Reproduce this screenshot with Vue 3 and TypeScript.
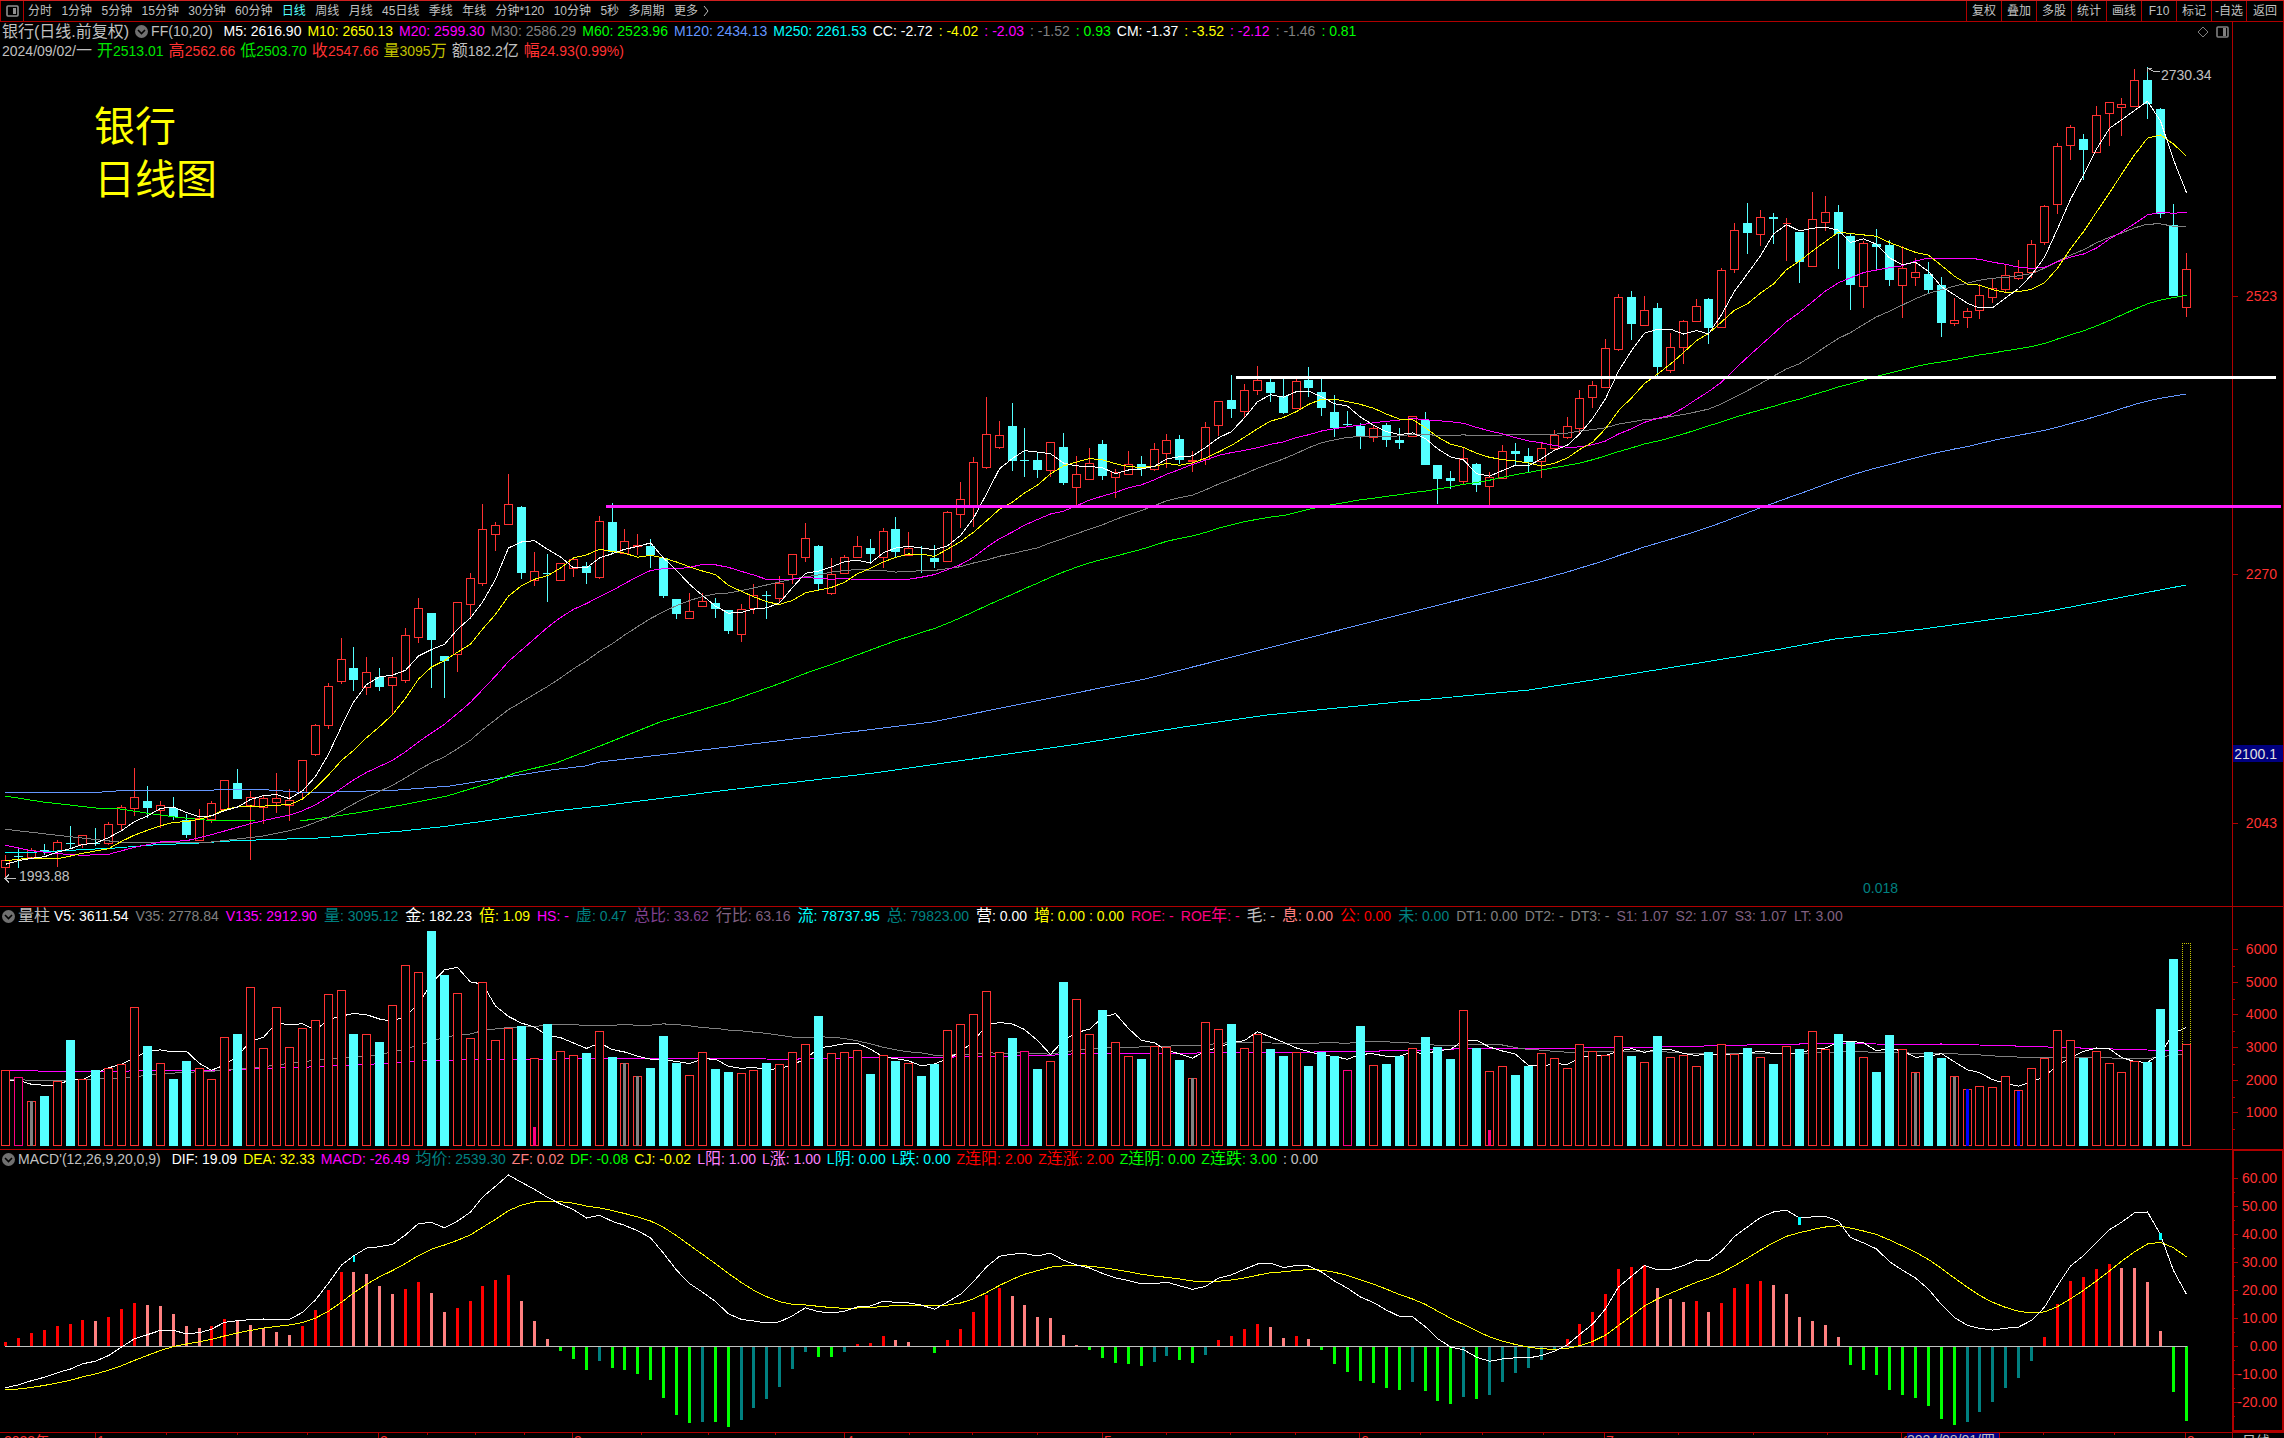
<script setup lang="ts">
type Point = [number, number]
interface Entry { text: string; color: string }
interface Run { text: string; han: boolean }
interface Candle { up: boolean; high: number; top: number; bottom: number; low: number; close: number }

const periods = ['分时', '1分钟', '5分钟', '15分钟', '30分钟', '60分钟', '日线', '周线', '月线', '45日线', '季线', '年线', '分钟*120', '10分钟', '5秒', '多周期', '更多']
const tools = ['复权', '叠加', '多股', '统计', '画线', 'F10', '标记', '-自选', '返回']

const RED = '#ff3232'
const AQUA = '#54ffff'
const SILVER = '#c0c0c0'
const GRAY = '#808080'
const TEAL = '#008080'
const MAGENTA = '#ff00ff'
const YELLOW = '#ffff00'
const LIME = '#00ff00'
const CYAN = '#00ffff'
const WHITE = '#ffffff'
const PINK = '#ff0080'
const SALMON = '#ff8080'
const PLUM = '#806080'
const BLUE = '#6496ff'

const e = (text: string, color: string): Entry => ({ text, color })

const averages: Entry[] = [
  e('M5: 2616.90', WHITE), e('M10: 2650.13', YELLOW), e('M20: 2599.30', MAGENTA), e('M30: 2586.29', GRAY),
  e('M60: 2523.96', LIME), e('M120: 2434.13', BLUE), e('M250: 2261.53', CYAN), e('CC: -2.72', WHITE),
  e(': -4.02', YELLOW), e(': -2.03', MAGENTA), e(': -1.52', GRAY), e(': 0.93', LIME), e('CM: -1.37', WHITE),
  e(': -3.52', YELLOW), e(': -2.12', MAGENTA), e(': -1.46', GRAY), e(': 0.81', LIME),
]
const quote: Entry[] = [
  e('2024/09/02/一', SILVER), e('开2513.01', '#00e600'), e('高2562.66', RED), e('低2503.70', '#00e600'),
  e('收2547.66', RED), e('量3095万', '#c0c000'), e('额182.2亿', SILVER), e('幅24.93(0.99%)', RED),
]
const volumeStats: Entry[] = [
  e('V5: 3611.54', WHITE), e('V35: 2778.84', GRAY), e('V135: 2912.90', MAGENTA), e('量: 3095.12', TEAL),
  e('金: 182.23', WHITE), e('倍: 1.09', YELLOW), e('HS: -', MAGENTA), e('虚: 0.47', TEAL), e('总比: 33.62', '#804090'),
  e('行比: 63.16', PLUM), e('流: 78737.95', CYAN), e('总: 79823.00', TEAL), e('营: 0.00', WHITE), e('增: 0.00 : 0.00', YELLOW),
  e('ROE: -', PINK), e('ROE年: -', PINK), e('毛: -', SILVER), e('息: 0.00', SALMON), e('公: 0.00', '#ff0000'),
  e('未: 0.00', TEAL), e('DT1: 0.00', GRAY), e('DT2: -', GRAY), e('DT3: -', GRAY), e('S1: 1.07', PLUM),
  e('S2: 1.07', PLUM), e('S3: 1.07', PLUM), e('LT: 3.00', PLUM),
]
const macdStats: Entry[] = [
  e('DIF: 19.09', WHITE), e('DEA: 32.33', YELLOW), e('MACD: -26.49', MAGENTA), e('均价: 2539.30', TEAL),
  e('ZF: 0.02', SALMON), e('DF: -0.08', LIME), e('CJ: -0.02', YELLOW), e('L阳: 1.00', '#ff80ff'), e('L涨: 1.00', '#ff80ff'),
  e('L阴: 0.00', CYAN), e('L跌: 0.00', CYAN), e('Z连阳: 2.00', '#ff0000'), e('Z连涨: 2.00', '#ff0000'),
  e('Z连阴: 0.00', LIME), e('Z连跌: 3.00', LIME), e(': 0.00', SILVER),
]

/* Chinese runs are set larger than the digits beside them. */
function runs(text: string): Run[] {
  return text.split(/([\u4e00-\u9fff]+)/).filter(Boolean).map(t => ({ text: t, han: /[\u4e00-\u9fff]/.test(t) }))
}

/* Horizontal pixel of bar i. */
const X = (i: number) => Math.round(5 + i * 12.905)

/* Candles: direction, high, body top, body bottom, low, in thirds of a unit below `base`. */
function candles(base: number, rows: string): Candle[] {
  return rows.trim().split(/\s+/).map(row => {
    const up = row[0] === 'r'
    const [high, top, bottom, low] = row.slice(1).split(',').map(v => base + Number(v) / 3)
    return { up, high, top, bottom, low, close: up ? top : bottom }
  })
}

const bars: Candle[] = [
  ...candles(440, `
    r1246,1261,1282,1315 c1226,1249,1249,1283 r1224,1231,1252,1252 c1212,1231,1234,1245 r1200,1207,1234,1280
    c1158,1210,1210,1224 r1186,1186,1213,1224 c1164,1208,1210,1217 r1146,1153,1210,1214 r1095,1102,1153,1170
    r984,1072,1105,1128 c1038,1084,1103,1133 r1083,1096,1111,1163 c1071,1105,1132,1140 c1121,1140,1185,1194
    r1107,1134,1201,1201 r1083,1090,1138,1148 r1021,1021,1107,1110 c987,1030,1076,1076 r1053,1072,1096,1260
    r1066,1075,1102,1151 r999,1075,1087,1119 r1047,1081,1096,1144 r961,961,1057,1075 r852,856,943,948
    r730,739,856,866 r594,658,724,732 c621,685,719,753 r651,697,742,765 c684,711,740,753
    r651,712,736,823 r564,586,721,728 r474,505,592,609 c519,519,599,744 c648,648,663,774
    r487,487,643,696 r400,415,493,535 r192,268,430,437 r246,256,283,333 r102,193,253,253
    c198,202,398,417 r336,394,421,437 c342,398,398,486 r370,370,421,421 r350,358,385,411 c366,378,398,432`),
  ...candles(380, `
    r408,424,592,597 c369,427,515,519 r447,484,520,520 r462,496,499,525 c477,498,525,564
    c534,534,648,654 c657,657,701,717 r639,694,715,715 r639,664,679,679 c654,669,686,714
    c690,690,753,762 r672,688,763,786 r612,646,685,702 c633,646,646,717 r588,610,655,670
    r523,523,583,612 r429,475,532,546 c495,498,612,631 r534,583,640,645 r525,532,580,580
    r468,499,532,532 c477,504,521,549 r444,454,532,564 c411,447,515,531 r456,505,525,525
    c498,523,526,579 c495,534,545,564 r393,397,544,544 r306,358,403,444 r231,247,379,441
    r51,163,262,267 r123,166,202,207 c69,138,242,273 c144,241,241,291 c219,241,269,294
    r187,187,271,290 c159,202,308,315 r228,283,322,376 r204,250,298,298 c180,192,287,300
    r267,277,292,354 r213,253,283,283 c228,252,268,288 r189,208,268,273`),
  ...candles(340, `
    r282,301,341,384 c285,297,360,372 r333,361,365,396 r246,262,358,375 r184,184,257,288
    c105,180,207,234 r132,151,215,230 r78,121,152,165 c115,126,159,186 c115,169,219,222
    r115,124,206,206 c81,120,144,171 c115,156,204,228 c165,216,264,291 c213,252,255,261
    c249,257,290,327 r258,265,293,306 c249,255,300,321 c264,300,309,327 r229,229,290,290
    c216,240,375,375 c375,375,417,492 c393,414,423,447 r321,355,425,431 c369,372,435,456
    r396,412,440,495 r315,334,414,417 c309,333,342,375 c324,348,366,397 r306,325,364,414
    r270,286,325,330 r231,259,293,297 r150,175,266,283 r123,136,173,204`),
  ...candles(180, `
    r477,505,623,623 r342,352,509,513 c333,351,432,480 r348,391,437,437 c369,384,561,588
    r459,502,572,579 r420,424,503,552 r357,379,425,425 c354,357,444,492 r264,271,443,443
    r129,151,269,279 c69,129,159,222 r90,112,164,198 c99,111,117,192 r114,130,130,243
    c156,156,246,309 r36,118,260,260 r48,97,128,153 c75,96,162,267 c159,168,315,390
    r183,190,320,384 c147,192,201,267 c180,195,300,318 r198,265,317,414 r234,277,293,318
    c246,282,330,340 c291,315,429,471 r354,421,429,438 r384,394,413,444 r312,346,392,417
    r294,325,353,369 r252,286,329,340 r240,277,296,300 r180,193,278,293`),
  ...candles(0, `
    r615,619,728,735 r429,439,614,642 r375,382,437,480 c402,417,450,540 r318,346,458,458
    r307,307,341,438 r294,313,323,408 r207,241,320,320 c201,240,312,357 c324,327,642,654
    c612,675,888,888 r759,808,922,951`),
]

function hollow(i: number, top: number, bottom: number): string {
  const y = Math.floor(top)
  return `M${X(i) - 3.5} ${y + 0.5}h8v${Math.floor(bottom) - y}h-8z`
}

/* Linear interpolation between [index, value] anchors. */
function between(anchors: Point[]): number[] {
  const out: number[] = []
  for (let k = 1; k < anchors.length; k++) {
    const [i0, v0] = anchors[k - 1]
    const [i1, v1] = anchors[k]
    for (let i = i0; i < i1; i++) out.push(v0 + ((v1 - v0) * (i - i0)) / (i1 - i0))
  }
  out.push(anchors[anchors.length - 1][1])
  return out
}

/* Moving average over n values, led by the values known from earlier history. */
function average(values: number[], n: number, lead: number[]): number[] {
  return values.map((_, i) => i < n - 1 ? lead[i] : values.slice(i - n + 1, i + 1).reduce((a, b) => a + b, 0) / n)
}

const polyline = (values: number[]) => values.map((v, i) => `${X(i) + 0.5},${v.toFixed(1)}`).join(' ')
const joined = (points: Point[]) => points.map(p => p.join(',')).join(' ')

const closes = bars.map(b => b.close)
const fromPrice = (anchors: Point[]) => between(anchors).map(v => 440 + v / 3)
const ma5 = average(closes, 5, fromPrice([[0, 1273], [1, 1262], [2, 1255], [3, 1250]]))
const ma10 = average(closes, 10, fromPrice([[0, 1262], [2, 1254], [4, 1256], [6, 1240], [8, 1226]]))
const ma20 = average(closes, 20, fromPrice([[0, 1216], [2, 1232], [4, 1241], [6, 1246], [8, 1243], [10, 1222], [12, 1206], [14, 1202], [16, 1184], [18, 1162]]))
const ma30 = average(closes, 30, fromPrice([[0, 1168], [4, 1186], [9, 1207], [16, 1206], [20, 1188], [22, 1172], [23, 1162], [25, 1132], [28, 1072]]))
const tail = (n: number): Point[] => average(closes, n, []).map((v, i): Point => [X(i) + 0.5, v]).slice(n - 1)
const ma60: Point[] = [[5, 796], [43, 802], [96, 808], [120, 809], [146, 813], [175, 817], [205, 820], [255, 821], [300, 821], [330, 817], [362, 812], [402, 805], [447, 796], [490, 783], [515, 773], [556, 763], [600, 746], [660, 722], [728, 702], ...tail(60)]
const ma120: Point[] = [[5, 792], [102, 792], [130, 790], [214, 790], [230, 789], [256, 789], [296, 792], [335, 792], [398, 790], [450, 786], [513, 776], [551, 770], [585, 766], [600, 762], [728, 747], [932, 722], [1145, 679], ...tail(120)]
const ma250: Point[] = [[5, 853], [38, 852], [76, 850], [115, 848], [153, 845], [199, 843], [230, 841], [256, 840], [318, 838], [356, 835], [402, 831], [440, 827], [478, 822], [513, 817], [555, 811], [600, 806], [728, 790], [874, 773], [1078, 744], [1183, 727], [1267, 715], [1398, 702], [1529, 690], [1631, 674], [1748, 655], [1835, 639], [1923, 629], [2039, 613], [2097, 602], [2186, 585]]

const volumes = `
  511 532 604 588 544 420 538 510 505 493 322 438 490 537 483 505 538 412 402 262 445 322 442 385 361 283 271 402 403 426
  316 196 217 93 225 280 415 247 421 385 378 475 372 454 466 459 394 471 490 529 504 408 489 526 457 507 516 520 511 489
  493 457 433 348 460 457 451 522 466 483 490 528 492 391 373 343 274 457 414 454 507 484 246 298 403 330 427 469 477 439
  442 480 535 367 388 372 445 403 447 468 457 498 456 468 511 378 496 492 468 445 411 441 477 331 444 514 499 525 498 460
  475 505 433 454 466 409 468 487 408 472 466 499 456 433 463 444 472 492 439 447 394 448 402 426 472 516 405 449 518 457
  475 530 567 560 563 530 572 506 476 392 422 475 455 491 518 485 487 328 178 434`.trim().split(/\s+/).map(v => 900 + Number(v) / 3)
const outlined = [1, 79, 104]
const striped = [2, 48, 49, 92, 148, 151]
const marked = [152, 156]
const small: Point[] = [[41, 1127], [115, 1130]]
const fromVolume = (anchors: Point[]) => between(anchors).map(v => 900 + v / 3)
const v5 = average(volumes, 5, fromVolume([[0, 540], [1, 541], [2, 553], [3, 556]]))
const v35 = average(volumes, 35, fromVolume([[0, 537], [2, 541], [5, 540], [10, 532], [11, 524], [14, 517], [16, 514], [18, 508], [20, 500], [22, 490], [25, 476], [29, 464], [31, 447], [33, 424]]))
const v135 = fromVolume([[0, 511], [2, 512], [3, 514], [9, 514], [11, 511], [17, 511], [20, 505], [23, 502], [26, 496], [30, 490], [33, 481], [37, 479], [43, 478], [44, 475], [57, 475], [60, 478], [63, 476], [66, 473], [72, 472], [81, 466], [83, 461], [91, 460], [95, 457], [100, 457], [108, 452], [113, 446], [120, 445], [127, 442], [133, 437], [137, 433], [143, 430], [147, 434], [150, 432], [155, 437], [160, 443], [165, 449], [169, 453]])

const oscillator = `
  606 594 579 570 558 552 540 543 531 507 489 495 498 522 558 564 558 537 545 555 564 576 585 558 510 450 396 396 402 438
  462 447 426 459 516 504 483 438 420 405 483 543 597 633 657 690 663 684 690 702 720 774 825 849 846 846 861 840 804 777
  741 687 636 651 651 636 612 609 588 600 606 619 639 600 567 516 465 444 468 495 531 534 585 615 630 654 669 672 678 666
  648 660 669 645 600 588 567 552 561 594 588 597 630 672 696 723 729 744 750 726 753 783 792 771 777 765 726 699 684 660
  631 597 552 516 462 387 381 375 444 477 486 485 516 489 444 432 423 435 462 531 543 555 591 675 690 705 750 765 774 798
  837 856 847 816 786 744 714 663 591 492 423 411 388 372 385 385 427 574 756 843`.trim().split(/\s+/).map(v => (619 - Number(v)) / 3)
const ZERO = 1346
const columns = oscillator.map((h, i) => {
  const rising = h > (i ? oscillator[i - 1] : 0)
  const size = Math.round(Math.abs(h))
  return { h, size, y: h > 0 ? ZERO - size : ZERO, color: h > 0 ? (rising ? '#ff0000' : SALMON) : (rising && i !== 63 ? TEAL : LIME) }
})
/* The signal line moves by a fixed share of each column. */
const dea: number[] = []
oscillator.forEach((h, i) => dea.push(i ? dea[i - 1] - h * (h > 0 ? 0.122 : 0.1225) : 1390))
const dif = dea.map((v, i) => v - oscillator[i] / 2)

const priceTicks: [string, number][] = [['2523', 296], ['2270', 574], ['2043', 823]]
const volumeTicks: [string, number][] = [['6000', 949], ['5000', 982], ['4000', 1014], ['3000', 1047], ['2000', 1080], ['1000', 1112]]
const macdTicks: [string, number][] = [60, 50, 40, 30, 20, 10, 0, -10, -20].map((v): [string, number] => [v.toFixed(2), Math.round(ZERO - v * 2.8)])

const months: [string, number][] = [['2023年', 2], ['1', 95], ['2', 378], ['3', 572], ['4', 844], ['5', 1102], ['6', 1359], ['7', 1604], ['8', 1901], ['9', 2185]]
const weeks = [166, 237, 307, 427, 475, 524, 641, 708, 775, 909, 972, 1037, 1166, 1230, 1295, 1420, 1482, 1543, 1678, 1753, 1827, 2043, 2114]
</script>

<template>
  <div class="terminal">
    <nav class="menu">
      <button class="panel-toggle" aria-label="侧栏">
        <svg width="13" height="12" viewBox="0 0 13 12"><rect x="1" y="1" width="11" height="10" rx="1" fill="none" stroke="#909090" stroke-width="1.6" /><rect x="7" y="3" width="3" height="6" fill="#909090" /></svg>
      </button>
      <div class="periods">
        <button v-for="p in periods" :key="p" :class="{ active: p === '日线' }">{{ p }}<svg v-if="p === '更多'" class="more" width="7" height="12" viewBox="0 0 7 12"><path d="M1 1l4 5l-4 5" fill="none" stroke="#c0c0c0" /></svg></button>
      </div>
      <div class="tools">
        <button v-for="t in tools" :key="t">{{ t }}</button>
      </div>
    </nav>

    <section class="pane">
      <div class="plot">
        <header class="info">
          <span class="name">银行(日线.前复权)</span>
          <svg class="fold" width="13" height="13" viewBox="0 0 13 13"><circle cx="6.5" cy="6.5" r="6.5" fill="#707070" /><path d="M3 5l3.500 3.500l3.500-3.500" fill="none" stroke="#000" stroke-width="1.600" /></svg>
          <span class="title">FF(10,20)</span>
          <span v-for="(a, k) in averages" :key="k" :style="{ color: a.color }">{{ a.text }}</span>
          <span class="corner">
            <svg width="12" height="12" viewBox="0 0 12 12"><path d="M6 1l5 5l-5 5l-5-5z" fill="none" stroke="#808080" /></svg>
            <svg width="13" height="12" viewBox="0 0 13 12"><rect x="1" y="1" width="11" height="10" rx="1" fill="none" stroke="#808080" stroke-width="1.600" /><rect x="7" y="2" width="3" height="8" fill="#808080" /></svg>
          </span>
        </header>
        <header class="info quote">
          <span v-for="(q, k) in quote" :key="k" :style="{ color: q.color }"><span v-for="(r, j) in runs(q.text)" :key="j" :class="{ han: r.han }">{{ r.text }}</span></span>
        </header>
        <svg class="chart" viewBox="0 60 2232 846">
          <template v-for="(b, i) in bars" :key="i">
            <rect :x="X(i)" :y="Math.round(b.high)" width="1" :height="Math.max(0, Math.round(b.top) - Math.round(b.high))" :fill="b.up ? RED : AQUA" />
            <rect :x="X(i)" :y="Math.round(b.bottom)" width="1" :height="Math.max(0, Math.round(b.low) - Math.round(b.bottom))" :fill="b.up ? RED : AQUA" />
            <path v-if="b.up" :d="hollow(i, b.top, b.bottom)" fill="none" :stroke="RED" />
            <rect v-else :x="X(i) - 4" :y="Math.round(b.top)" width="9" :height="Math.max(1, Math.round(b.bottom) - Math.round(b.top))" :fill="AQUA" />
          </template>
          <g fill="none">
            <polyline :points="joined(ma250)" :stroke="CYAN" />
            <polyline :points="joined(ma120)" :stroke="BLUE" />
            <polyline :points="joined(ma60)" :stroke="LIME" />
            <polyline :points="polyline(ma30)" :stroke="GRAY" />
            <polyline :points="polyline(ma20)" :stroke="MAGENTA" />
            <polyline :points="polyline(ma10)" :stroke="YELLOW" />
            <polyline :points="polyline(ma5)" :stroke="WHITE" />
            <path d="M2147.500 72v-4h4m-4 0l5 3l7 1" :stroke="SILVER" />
            <path d="M5 878.500h11M9 874.500l-4 4l4 4" :stroke="SILVER" />
          </g>
          <rect x="1236" y="376" width="1040" height="3" fill="#ffffff" />
          <rect x="606" y="505" width="1675" height="3" fill="#ff1eff" />
          <text x="2161" y="80" :fill="SILVER">2730.34</text>
          <text x="19" y="881" :fill="SILVER">1993.88</text>
          <text x="1863" y="893" :fill="TEAL">0.018</text>
        </svg>
        <p class="note">银行<br>日线图</p>
      </div>
      <div class="axis">
        <svg viewBox="2233 22 50 884">
          <g v-for="[label, y] in priceTicks" :key="label">
            <rect x="2233" :y="y" width="5" height="1" fill="#b00000" />
            <text x="2277" :y="y + 5" text-anchor="end" :fill="RED">{{ label }}</text>
          </g>
          <rect x="2233" y="745" width="50" height="17" fill="#000080" />
          <text x="2277" y="759" text-anchor="end" fill="#e0e0e0">2100.1</text>
        </svg>
      </div>
    </section>

    <section class="pane">
      <div class="plot">
        <header class="info low volume">
          <svg class="fold" width="13" height="13" viewBox="0 0 13 13"><circle cx="6.5" cy="6.5" r="6.5" fill="#707070" /><path d="M3 5l3.500 3.500l3.500-3.500" fill="none" stroke="#000" stroke-width="1.600" /></svg>
          <span class="title han">量柱</span>
          <span v-for="(a, k) in volumeStats" :key="k" :style="{ color: a.color }"><span v-for="(r, j) in runs(a.text)" :key="j" :class="{ han: r.han }">{{ r.text }}</span></span>
        </header>
        <svg class="chart" viewBox="0 925 2232 224">
          <g fill="none">
            <polyline :points="polyline(v135)" :stroke="MAGENTA" />
            <polyline :points="polyline(v35)" :stroke="GRAY" />
            <polyline :points="polyline(v5)" :stroke="WHITE" />
          </g>
          <template v-for="(y, i) in volumes" :key="i">
            <path v-if="bars[i].up || outlined.includes(i)" :d="hollow(i, y, 1145)" fill="#000" :stroke="outlined.includes(i) ? PINK : RED" />
            <rect v-else :x="X(i) - 4" :y="Math.round(y)" width="9" :height="1146 - Math.round(y)" :fill="AQUA" />
          </template>
          <rect v-for="i in striped" :key="'s' + i" :x="X(i) - 1" :y="Math.round(volumes[i])" width="3" :height="1146 - Math.round(volumes[i])" :fill="GRAY" />
          <rect v-for="i in marked" :key="'m' + i" :x="X(i) - 1" :y="Math.round(volumes[i])" width="3" :height="1146 - Math.round(volumes[i])" fill="#0000ff" />
          <rect v-for="[i, y] in small" :key="'p' + i" :x="X(i) - 1" :y="y" width="3" :height="1146 - y" :fill="PINK" />
          <path d="M2182.500 1044v-100.500h8v100.500" fill="none" stroke="#c8c800" stroke-dasharray="1 1" />
        </svg>
      </div>
      <div class="axis">
        <svg viewBox="2233 907 50 242">
          <g v-for="[label, y] in volumeTicks" :key="label">
            <rect x="2233" :y="y" width="5" height="1" fill="#b00000" />
            <rect x="2233" :y="y + 17" width="2" height="1" fill="#b00000" />
            <text x="2277" :y="y + 5" text-anchor="end" :fill="RED">{{ label }}</text>
          </g>
        </svg>
      </div>
    </section>

    <section class="pane">
      <div class="plot">
        <header class="info low macd">
          <svg class="fold" width="13" height="13" viewBox="0 0 13 13"><circle cx="6.5" cy="6.5" r="6.5" fill="#707070" /><path d="M3 5l3.500 3.500l3.500-3.500" fill="none" stroke="#000" stroke-width="1.600" /></svg>
          <span class="title">MACD'(12,26,9,20,0,9)</span>
          <span v-for="(a, k) in macdStats" :key="k" :style="{ color: a.color }"><span v-for="(r, j) in runs(a.text)" :key="j" :class="{ han: r.han }">{{ r.text }}</span></span>
        </header>
        <svg class="chart" viewBox="0 1168 2232 263">
          <rect v-for="(c, i) in columns" :key="i" :x="X(i) - 1" :y="c.y" width="3" :height="c.size" :fill="c.color" />
          <rect x="5" :y="ZERO" width="2182" height="1" :fill="SILVER" />
          <polyline :points="polyline(dea)" fill="none" :stroke="YELLOW" />
          <polyline :points="polyline(dif)" fill="none" :stroke="WHITE" />
          <rect :x="X(27)" y="1256" width="2" height="6" :fill="CYAN" />
          <rect :x="X(139) - 1" y="1217" width="3" height="8" :fill="CYAN" />
          <rect :x="X(167) - 1" y="1233" width="3" height="7" :fill="CYAN" />
        </svg>
      </div>
      <div class="axis selected">
        <svg viewBox="2234 1151 48 279">
          <g v-for="[label, y] in macdTicks" :key="label">
            <rect x="2234" :y="y" width="4" height="1" fill="#b00000" />
            <rect x="2234" :y="y + 14" width="1" height="1" fill="#b00000" />
            <text x="2277" :y="y + 5" text-anchor="end" :fill="RED">{{ label }}</text>
          </g>
        </svg>
      </div>
    </section>

    <footer class="dates">
      <svg class="chart" viewBox="0 1432 2284 20">
        <g v-for="([label, x], k) in months" :key="label">
          <rect v-if="k" :x="x" y="1432" width="1" height="20" fill="#b00000" />
          <text :x="x + 2" y="1445" :fill="RED">{{ label }}</text>
        </g>
        <rect v-for="x in weeks" :key="x" :x="x" y="1432" width="1" height="2" fill="#b00000" />
        <rect x="1907" y="1432" width="92" height="20" fill="#000080" />
        <rect x="1999" y="1432" width="1" height="20" fill="#b00000" />
        <text x="1907" y="1444" :fill="SILVER">2024/08/01/四</text>
        <rect x="2232" y="1432" width="1" height="20" fill="#b00000" />
        <text x="2242" y="1445" :fill="SILVER">日线</text>
      </svg>
    </footer>
  </div>
</template>

<style>
body {
  margin: 0;
  background: #000;
}
</style>

<style scoped>
.terminal {
  height: 100vh;
  overflow: hidden;
  background: #000;
  color: #c0c0c0;
  font: 14px/18px "Liberation Sans", "Noto Sans CJK SC", sans-serif;
}
button {
  margin: 0;
  padding: 0;
  border: 0;
  background: none;
  color: inherit;
  font: inherit;
  white-space: nowrap;
}
.menu {
  display: flex;
  box-sizing: border-box;
  height: 22px;
  border-top: 1px solid #d02020;
  border-bottom: 1px solid #b00000;
  font-size: 12px;
  line-height: 20px;
}
.panel-toggle {
  display: flex;
  align-items: center;
  justify-content: center;
  box-sizing: border-box;
  width: 24px;
  border-left: 1px solid #b00000;
  border-right: 1px solid #b00000;
}
.periods {
  display: flex;
  justify-content: space-between;
  width: 682px;
  margin-left: 4px;
}
.periods .active {
  color: #54ffff;
}
.more {
  margin-left: 5px;
  vertical-align: -2px;
}
.tools {
  display: flex;
  margin-left: auto;
  border-right: 1px solid #b00000;
}
.tools button {
  box-sizing: border-box;
  width: 35px;
  border-left: 1px solid #b00000;
}
.tools button:last-child {
  width: 37px;
}
.pane {
  display: flex;
  border-bottom: 1px solid #b00000;
}
.plot {
  position: relative;
  flex: 1;
  min-width: 0;
}
.info {
  display: flex;
  align-items: center;
  gap: 6px;
  height: 19px;
  padding-left: 2px;
  line-height: 19px;
  white-space: nowrap;
}
.info.quote {
  gap: 5px;
}
.info.low {
  height: 18px;
  line-height: 18px;
}
.info.volume {
  gap: 7px;
}
.fold {
  flex: none;
}
.fold + .title {
  margin-left: -3px;
  margin-right: 5px;
}
.volume .fold + .title {
  margin-left: -4px;
  margin-right: -3px;
}
.name,
.han {
  font-size: 16px;
}
.corner {
  display: flex;
  gap: 7px;
  margin-left: auto;
  padding-right: 3px;
}
.chart {
  display: block;
  width: 100%;
  overflow: visible;
  position: relative;
  z-index: 1;
  shape-rendering: crispEdges;
}
.note {
  position: absolute;
  left: 94px;
  top: 79px;
  margin: 0;
  color: #ffff00;
  font-size: 41px;
  line-height: 53px;
}
.axis {
  box-sizing: border-box;
  width: 52px;
  border-left: 1px solid #b00000;
  border-right: 1px solid #b00000;
}
.axis svg {
  display: block;
  width: 100%;
  shape-rendering: crispEdges;
}
.axis.selected {
  border: 2px solid #b00000;
  margin-top: -1px;
}
.dates .chart {
  overflow: hidden;
}
</style>
